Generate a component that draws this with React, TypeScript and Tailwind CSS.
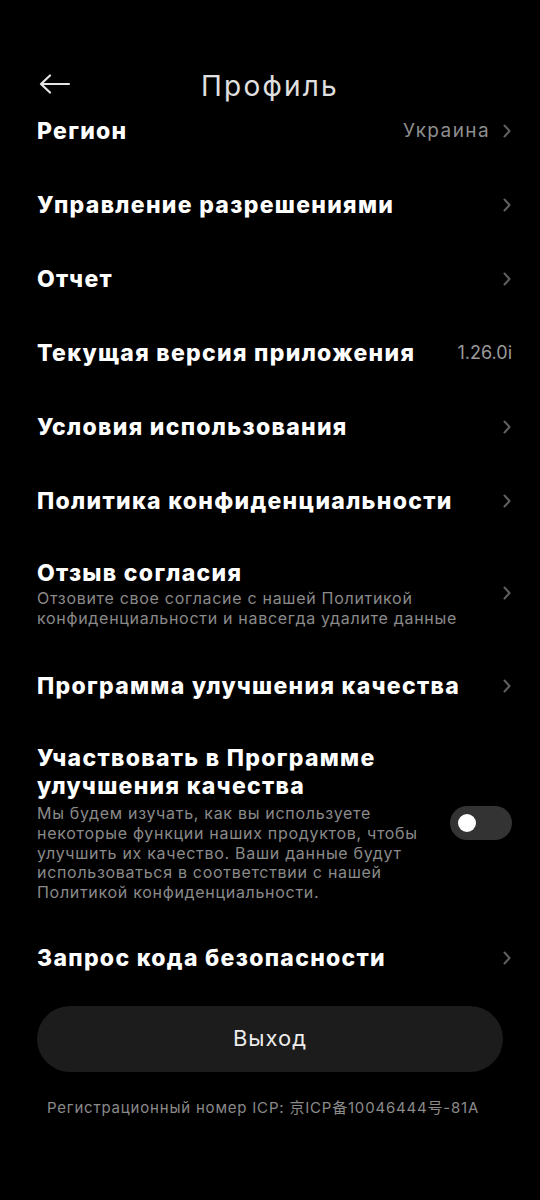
import React from "react";

const font = { fontFamily: "Inter, 'Noto Sans', 'Noto Sans CJK SC', sans-serif" };

function Chevron() {
  return (
    <svg width="10" height="16" viewBox="0 0 10 16" className="shrink-0">
      <path d="M2.5 2.5 L7.5 8 L2.5 13.5" fill="none" stroke="#5f5f5f" strokeWidth="2" strokeLinecap="round" strokeLinejoin="round" />
    </svg>
  );
}

function Row({ title, value, chevron = true }: { title: string; value?: string; chevron?: boolean }) {
  return (
    <div className="flex items-center justify-between py-[22px] pl-[37px] pr-[28px]">
      <div className="text-[23px] font-extrabold leading-[30px] text-white tracking-[1.3px]">{title}</div>
      <div className="flex items-center gap-[12px]">
        {value && <span className="text-[19px] leading-[30px] text-[#8e8e8e] tracking-[1.4px]">{value}</span>}
        {chevron && <Chevron />}
      </div>
    </div>
  );
}

export default function App() {
  return (
    <div className="w-[540px] h-[1200px] bg-black text-white" style={font}>
      {/* header */}
      <div className="h-[94px] pt-[70px]">
        <div className="relative flex h-[32px] items-center justify-center">
          <svg width="32" height="20" viewBox="0 0 32 20" className="absolute left-[39px] top-[4px]">
            <path d="M2 10 H30 M2 10 L11 1.5 M2 10 L11 18.5" fill="none" stroke="#e5e5e5" strokeWidth="2.2" strokeLinecap="round" strokeLinejoin="round" />
          </svg>
          <span className="text-[28px] leading-[32px] text-[#e0e0e0] tracking-[2.2px]">Профиль</span>
        </div>
      </div>

      <Row title="Регион" value="Украина" />
      <Row title="Управление разрешениями" />
      <Row title="Отчет" />
      <div className="flex items-center justify-between py-[22px] pl-[37px] pr-[28px]">
        <div className="text-[23px] font-extrabold leading-[30px] text-white tracking-[1.3px]">Текущая версия приложения</div>
        <span className="text-[18px] leading-[30px] text-[#9a9a9a]">1.26.0i</span>
      </div>
      <Row title="Условия использования" />
      <Row title="Политика конфиденциальности" />

      <div className="flex items-center justify-between pt-[20px] pb-[21px] pl-[37px] pr-[28px]">
        <div>
          <div className="text-[23px] font-extrabold leading-[30px] text-white tracking-[1.3px]">Отзыв согласия</div>
          <div className="text-[16px] leading-[20px] text-[#8a8a8a] tracking-[0.7px]">
            Отзовите свое согласие с нашей Политикой
            <br />
            конфиденциальности и навсегда удалите данные
          </div>
        </div>
        <Chevron />
      </div>

      <Row title="Программа улучшения качества" />

      <div className="flex items-center justify-between pt-[21px] pb-[18px] pl-[37px] pr-[28px]">
        <div className="w-[405px]">
          <div className="text-[23px] font-extrabold leading-[28px] text-white tracking-[1.3px]">
            Участвовать в Программе
            <br />
            улучшения качества
          </div>
          <div className="mt-[4px] text-[16px] leading-[19.8px] text-[#8a8a8a] tracking-[0.7px]">
            Мы будем изучать, как вы используете
            <br />
            некоторые функции наших продуктов, чтобы
            <br />
            улучшить их качество. Ваши данные будут
            <br />
            использоваться в соответствии с нашей
            <br />
            Политикой конфиденциальности.
          </div>
        </div>
        <div className="flex h-[34px] w-[62px] items-center rounded-full bg-[#333333] pl-[8px]">
          <div className="h-[18px] w-[18px] rounded-full bg-white" />
        </div>
      </div>

      <Row title="Запрос кода безопасности" />

      <div className="mt-[11px] px-[37px]">
        <div className="flex h-[66px] w-[466px] items-center justify-center rounded-full bg-[#1c1c1c] text-[22px] text-[#ececec] tracking-[1px]">
          Выход
        </div>
      </div>

      <div className="mt-[26px] pl-[47px] text-[15px] leading-[20px] text-[#8a8a8a] tracking-[0.8px]">
        Регистрационный номер ICP: 京ICP备10046444号-81A
      </div>
    </div>
  );
}
